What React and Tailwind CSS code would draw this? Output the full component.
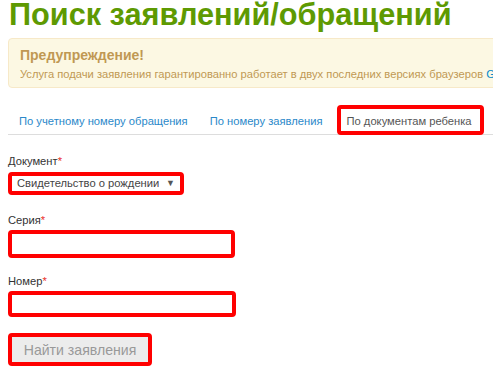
export default function App() {
  return (
    <div className="w-[493px] h-[377px] overflow-hidden bg-white font-['Liberation_Sans',Arial,sans-serif] text-[#333]">
      <h1 className="pl-[9px] text-[30.7px] leading-[30px] font-bold text-[#5e9a02] whitespace-nowrap">
        Поиск заявлений/обращений
      </h1>

      <div className="mt-[8px] ml-[8px] w-[520px] rounded-[4px] border border-[#f7e9c8] bg-[#fcf8e3] pl-[11px] pt-[8px] pb-[5px] text-[#c09853] whitespace-nowrap">
        <div className="text-[14px] leading-[16px] font-bold">Предупреждение!</div>
        <div className="mt-[3px] text-[11.2px] leading-[16px]">
          Услуга подачи заявления гарантированно работает в двух последних версиях браузеров{" "}
          <span className="text-[#0088cc]">Google Chrome</span>
        </div>
      </div>

      <ul className="mt-[17px] ml-[8px] flex items-start border-b border-[#dddddd] whitespace-nowrap text-[11.2px] leading-[16px]">
        <li className="px-[11px] pt-[8px] pb-[5px] text-[#2a88c9]">По учетному номеру обращения</li>
        <li className="px-[11px] pt-[8px] pb-[5px] text-[#2a88c9]">По номеру заявления</li>
        <li className="ml-[3px] -mb-px rounded-[4px] border-[4px] border-[#ff0000] bg-white pl-[6px] pr-[8px] pt-[4px] pb-[2px] text-[#555]">
          По документам ребенка
        </li>
      </ul>

      <div className="pl-[8px]">
        <div className="mt-[18px] text-[11.2px] leading-[16px]">
          Документ<span className="text-[#e9322d]">*</span>
        </div>
        <div className="mt-[3px] flex h-[23px] w-[176px] items-center justify-between rounded-[4px] border-[4px] border-[#ff0000] bg-white pl-[5px] pr-[5px]">
          <span className="whitespace-nowrap text-[11.2px] leading-[15px] text-[#444]">Свидетельство о рождении</span>
          <span className="text-[9px] leading-[9px] text-[#555]">▼</span>
        </div>

        <div className="mt-[17px] text-[11.2px] leading-[16px]">
          Серия<span className="text-[#e9322d]">*</span>
        </div>
        <div className="mt-[2px] h-[28px] w-[227px] rounded-[4px] border-[4px] border-[#ff0000] bg-white"></div>

        <div className="mt-[15px] text-[11.2px] leading-[16px]">
          Номер<span className="text-[#e9322d]">*</span>
        </div>
        <div className="mt-[2px] h-[26px] w-[228px] rounded-[4px] border-[4px] border-[#ff0000] bg-white"></div>

        <div className="mt-[16px] flex h-[33px] w-[144px] items-center justify-center rounded-[4px] border-[4px] border-[#ff0000] bg-[#ececec] text-[14.1px] leading-[18px] text-[#999]">
          Найти заявления
        </div>
      </div>
    </div>
  );
}
